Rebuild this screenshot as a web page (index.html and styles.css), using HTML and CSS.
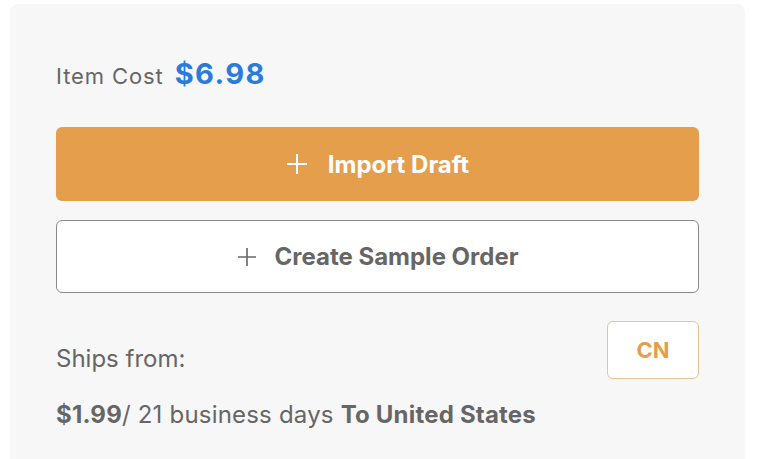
FILE: index.html
```html
<!DOCTYPE html>
<html lang="en">
  <head>
    <meta charset="UTF-8" />
    <meta name="viewport" content="width=device-width, initial-scale=1.0" />
    <title>Item Cost</title>
    <link rel="stylesheet" href="styles.css">
  </head>
  <body>
    <div class="card">
      <div class="cost">
        <span class="cost-label">Item Cost</span>
        <span class="cost-price">$6.98</span>
      </div>
      <div class="btn btn-import">
        <svg class="plus" width="22" height="22" viewBox="0 0 22 22"><path d="M11 1v20M1 11h20" stroke="currentColor" stroke-width="2" fill="none" /></svg>
        <span>Import Draft</span>
      </div>
      <div class="btn btn-sample">
        <svg class="plus" width="20" height="20" viewBox="0 0 20 20"><path d="M10 1v18M1 10h18" stroke="currentColor" stroke-width="1.6" fill="none" /></svg>
        <span>Create Sample Order</span>
      </div>
      <div class="ships">
        <span class="ships-label">Ships from:</span>
        <div class="country">CN</div>
      </div>
      <p class="shipping"><b>$1.99</b>/ 21 business days <b>To United States</b></p>
    </div>
  </body>
</html>
```

FILE: styles.css
```css
body {
  margin: 0;
  background-color: #fff;
  font-family: Inter, "Noto Sans", sans-serif;
  color: #666;
}
.card {
  width: 735px;
  height: 460px;
  margin: 4px 0 0 10px;
  padding: 54px 46px 0;
  box-sizing: border-box;
  background-color: #f7f7f7;
  border-radius: 8px 8px 0 0;
}
.cost {
  display: flex;
  align-items: baseline;
  height: 32px;
  line-height: 32px;
}
.cost-label {
  font-size: 22px;
  letter-spacing: 0.9px;
  margin-right: 11px;
}
.cost-price {
  font-size: 29px;
  font-weight: 700;
  letter-spacing: 1.4px;
  color: #2a7bdc;
}
.btn {
  display: flex;
  justify-content: center;
  align-items: center;
  box-sizing: border-box;
  border-radius: 6px;
  font-size: 24px;
  font-weight: 700;
}
.btn-import {
  height: 74px;
  margin-top: 37px;
  background-color: #e59e4c;
  color: #fff;
}
.btn-sample {
  height: 73px;
  margin-top: 19px;
  background-color: #fff;
  border: 1px solid #8a8a8a;
  color: #666;
}
.plus {
  margin-right: 20px;
}
.btn-sample .plus {
  margin-right: 18px;
}
.ships {
  display: flex;
  justify-content: space-between;
  align-items: center;
  margin-top: 28px;
}
.ships-label {
  font-size: 24px;
  padding-top: 16px;
}
.country {
  width: 92px;
  height: 58px;
  box-sizing: border-box;
  display: flex;
  justify-content: center;
  align-items: center;
  background-color: #fff;
  border: 1px solid #efc38f;
  border-radius: 6px;
  color: #e59e4c;
  font-size: 22px;
  font-weight: 700;
}
.shipping {
  margin: 21px 0 0;
  font-size: 24px;
  letter-spacing: 0.2px;
  line-height: 30px;
}
.shipping b {
  font-weight: 700;
}
```
